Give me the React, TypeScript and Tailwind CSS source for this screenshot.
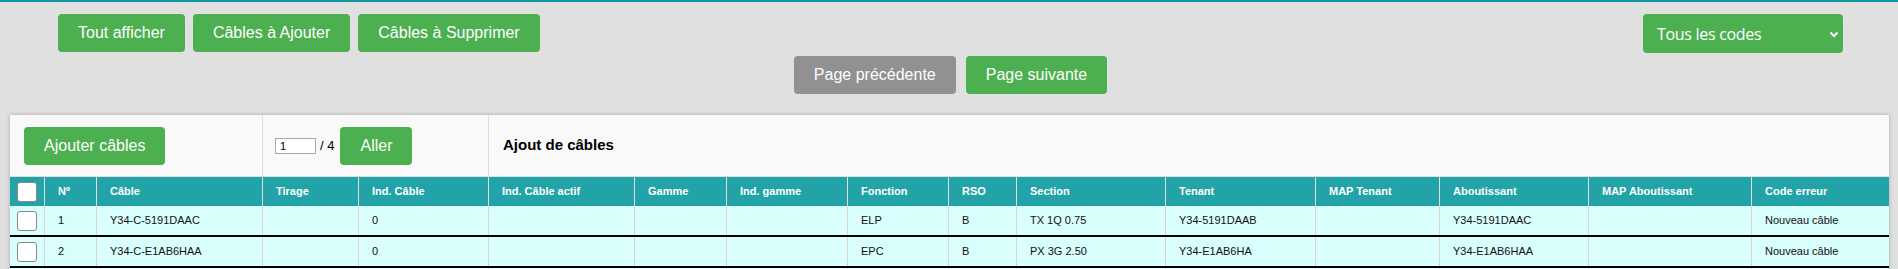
import React from "react";

const cols = [35, 52, 166, 96, 130, 146, 92, 121, 101, 68, 149, 150, 124, 149, 163, 137];
const gridCols =
  "grid grid-cols-[35px_52px_166px_96px_130px_146px_92px_121px_101px_68px_149px_150px_124px_149px_163px_137px]";

const headers = [
  "",
  "Nº",
  "Câble",
  "Tirage",
  "Ind. Câble",
  "Ind. Câble actif",
  "Gamme",
  "Ind. gamme",
  "Fonction",
  "RSO",
  "Section",
  "Tenant",
  "MAP Tenant",
  "Aboutissant",
  "MAP Aboutissant",
  "Code erreur",
];

const rows = [
  ["1", "Y34-C-5191DAAC", "", "0", "", "", "", "ELP", "B", "TX 1Q 0.75", "Y34-5191DAAB", "", "Y34-5191DAAC", "", "Nouveau câble"],
  ["2", "Y34-C-E1AB6HAA", "", "0", "", "", "", "EPC", "B", "PX 3G 2.50", "Y34-E1AB6HA", "", "Y34-E1AB6HAA", "", "Nouveau câble"],
  ["", "", "", "", "", "", "", "", "", "", "", "", "", "", ""],
];

function Btn({ children, gray = false, className = "" }: { children: React.ReactNode; gray?: boolean; className?: string }) {
  return (
    <button
      className={
        (gray ? "bg-[#919191] " : "bg-[#4caf50] ") +
        "h-[38px] px-5 rounded-[4px] text-white text-[16px] leading-none whitespace-nowrap " +
        className
      }
    >
      {children}
    </button>
  );
}

function Box() {
  return <div className="w-[20px] h-[20px] bg-white border border-[#8a8a8a] rounded-[3px]" />;
}

export default function App() {
  void cols;
  return (
    <div className="min-h-screen bg-[#e0e0e0] font-['Liberation_Sans',Arial,sans-serif] overflow-hidden">
      <div className="h-[2px] bg-[#0f94a0]" />
      <div className="pl-[58px] pr-[55px] pt-[12px]">
        <div className="flex justify-between items-start h-[42px]">
          <div className="flex gap-2">
            <Btn>Tout afficher</Btn>
            <Btn>Câbles à Ajouter</Btn>
            <Btn>Câbles à Supprimer</Btn>
          </div>
          <div className="w-[200px] h-[39px] bg-[#4caf50] rounded-[4px] flex items-center justify-between pl-[14px] pr-[4px]">
            <span className="text-white text-[16px] font-['Open_Sans',sans-serif] tracking-[-0.3px]">Tous les codes</span>
            <svg width="10" height="8" viewBox="0 0 10 8" className="mt-[1px]">
              <path d="M1.5 2.5 L5 6 L8.5 2.5" stroke="white" strokeWidth="2" fill="none" />
            </svg>
          </div>
        </div>
        <div className="flex justify-center gap-[10px] h-[38px]">
          <Btn gray>Page précédente</Btn>
          <Btn>Page suivante</Btn>
        </div>
      </div>

      <div className="mt-[21px] ml-[10px] mr-[9px] bg-[#f9f9f9] shadow-[0_0_4px_rgba(0,0,0,0.25)]">
        <div className={gridCols + " h-[62px] border-b border-[#dddddd]"}>
          <div className="col-span-3 border-r border-[#dddddd] flex items-center pl-[14px]">
            <Btn>Ajouter câbles</Btn>
          </div>
          <div className="col-span-2 border-r border-[#dddddd] flex items-center pl-[12px]">
            <div className="w-[41px] h-[16px] bg-white border border-[#a9a9a9] text-[11px] leading-[14px] pl-[4px] text-black">1</div>
            <span className="ml-[4px] text-[13px] text-black">/ 4</span>
            <Btn className="ml-[6px] w-[72px] px-0">Aller</Btn>
          </div>
          <div className="col-span-11 flex items-center pl-[14px]">
            <span className="text-[15px] font-bold text-black">Ajout de câbles</span>
          </div>
        </div>

        <div className={gridCols + " h-[29px] bg-[#21a3a8]"}>
          {headers.map((h, i) => (
            <div
              key={i}
              className={
                "flex items-center text-white text-[11px] font-bold " +
                (i === 0 ? "pl-[7px] " : "pl-[13px] ") +
                (i < headers.length - 1 ? "border-r border-[#dddddd]" : "")
              }
            >
              {i === 0 ? <Box /> : h}
            </div>
          ))}
        </div>

        {rows.map((r, ri) => (
          <div key={ri} className={gridCols + " h-[31px] bg-[#d9fffd] border-b-2 border-black"}>
            <div className="flex items-center pl-[7px] border-r border-[#d6d6d6]">
              {ri < 2 ? <Box /> : null}
            </div>
            {r.map((c, ci) => (
              <div
                key={ci}
                className={
                  "flex items-center pl-[13px] text-[11px] text-[#111] " +
                  (ci < r.length - 1 ? "border-r border-[#d6d6d6]" : "")
                }
              >
                {c}
              </div>
            ))}
          </div>
        ))}
      </div>
    </div>
  );
}
